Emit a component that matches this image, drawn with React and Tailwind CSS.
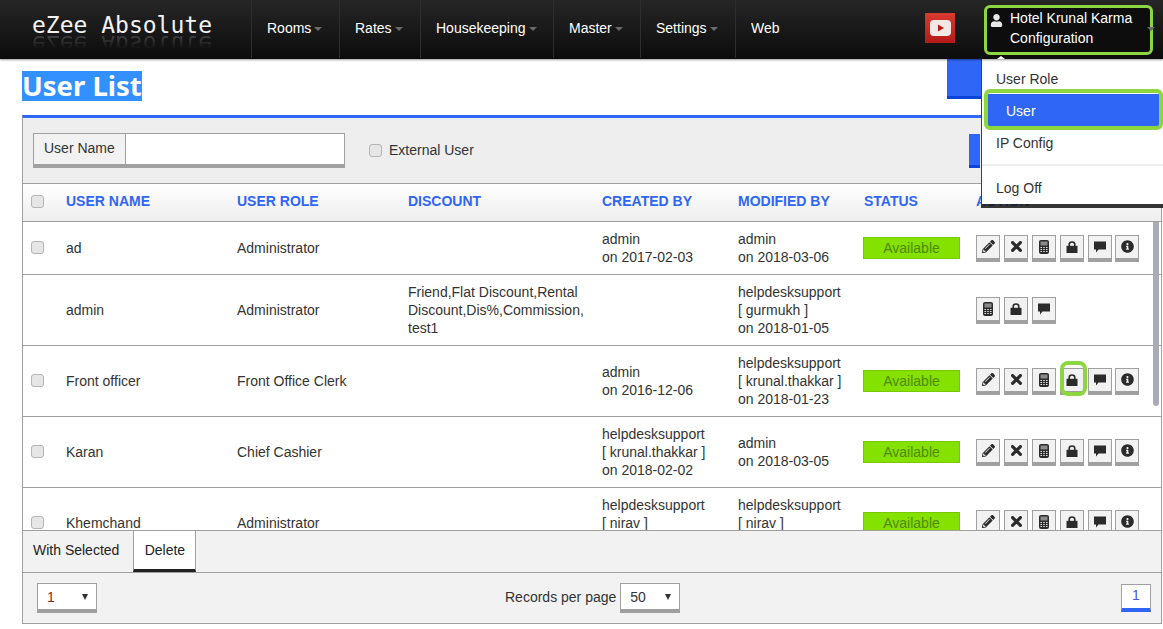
import React from "react";
import { FaPencilAlt, FaInfoCircle, FaUser } from "react-icons/fa";

const font = { fontFamily: '"Liberation Sans", Arial, sans-serif' };

const Calc = () => (
  <svg width="10" height="14" viewBox="0 0 10 14">
    <rect x="0" y="0" width="10" height="14" rx="2" fill="#2b2b2b" />
    <rect x="1.5" y="1.5" width="7" height="4" fill="#8a8a8a" />
    <g fill="#e8e8e8">
      <rect x="1.5" y="7" width="1.5" height="1" /><rect x="4.25" y="7" width="1.5" height="1" /><rect x="7" y="7" width="1.5" height="1" />
      <rect x="1.5" y="9" width="1.5" height="1" /><rect x="4.25" y="9" width="1.5" height="1" /><rect x="7" y="9" width="1.5" height="1" />
      <rect x="1.5" y="11" width="1.5" height="1" /><rect x="4.25" y="11" width="1.5" height="1" /><rect x="7" y="11" width="1.5" height="1" />
    </g>
  </svg>
);

const Cross = () => (
  <svg width="11" height="11" viewBox="0 0 11 11">
    <path d="M1.6 1.6 L9.4 9.4 M9.4 1.6 L1.6 9.4" stroke="#2b2b2b" strokeWidth="3.2" strokeLinecap="round" />
  </svg>
);

const Lock = () => (
  <svg width="12" height="12" viewBox="0 0 12 12">
    <path d="M3.2 5 V3.4 C3.2 1.8 4.4 1 6 1 C7.6 1 8.8 1.8 8.8 3.4 V5" fill="none" stroke="#2b2b2b" strokeWidth="1.6" />
    <rect x="0.5" y="4.8" width="11" height="7.2" fill="#2b2b2b" />
  </svg>
);

const Comment = () => (
  <svg width="12" height="12" viewBox="0 0 12 12">
    <path d="M0 0.5 H12 V8.5 H4.5 L2 11.5 V8.5 H0 Z" fill="#2b2b2b" />
  </svg>
);

const ActionBtn = ({ children, highlight, className = "" }) => (
  <div className={`relative w-6 h-[27px] bg-[#f2f2f2] border border-[#a0a0a0] border-b-[4px] flex items-center justify-center text-[#2b2b2b] ${highlight ? "z-10" : ""} ${className}`}>
    {children}
    {highlight && <div className="absolute -left-[1px] -right-[4px] -top-[8px] -bottom-[5px] border-[4px] border-[#8ed63f] rounded-lg"></div>}
  </div>
);

const Checkbox = ({ className = "" }) => <div className={`w-[13px] h-[13px] rounded-[3px] border border-[#b5b5b5] bg-[#e6e6e6] ${className}`}></div>;

const NavItem = ({ label, w, caret = true }) => (
  <div className={`${w} h-[58px] flex items-center pl-[15px] pb-[3px] border-l border-[#2e2e2e] text-white text-sm`}>
    {label}
    {caret && <span className="ml-[3px] mt-[3px] w-0 h-0 border-x-[4px] border-x-transparent border-t-[4px] border-t-[#6a6a6a]"></span>}
  </div>
);

const Actions = ({ full = true, highlight = false }) => (
  <div className="flex gap-1">
    {full && <ActionBtn><FaPencilAlt size={13} /></ActionBtn>}
    {full && <ActionBtn><Cross /></ActionBtn>}
    <ActionBtn><Calc /></ActionBtn>
    <ActionBtn highlight={highlight}><Lock /></ActionBtn>
    <ActionBtn><Comment /></ActionBtn>
    {full && <ActionBtn className="-ml-[1px]"><FaInfoCircle size={13} /></ActionBtn>}
  </div>
);

const rows = [
  { h: "h-[53px]", check: true, name: "ad", role: "Administrator", created: ["admin", "on 2017-02-03"], modified: ["admin", "on 2018-03-06"], status: true, full: true },
  { h: "h-[71px]", check: false, name: "admin", role: "Administrator", discount: ["Friend,Flat Discount,Rental", "Discount,Dis%,Commission,", "test1"], created: [], modified: ["helpdesksupport", "[ gurmukh ]", "on 2018-01-05"], status: false, full: false },
  { h: "h-[71px]", check: true, name: "Front officer", role: "Front Office Clerk", created: ["admin", "on 2016-12-06"], modified: ["helpdesksupport", "[ krunal.thakkar ]", "on 2018-01-23"], status: true, full: true, highlight: true },
  { h: "h-[71px]", check: true, name: "Karan", role: "Chief Cashier", created: ["helpdesksupport", "[ krunal.thakkar ]", "on 2018-02-02"], modified: ["admin", "on 2018-03-05"], status: true, full: true },
  { h: "h-[71px]", check: true, name: "Khemchand", role: "Administrator", created: ["helpdesksupport", "[ nirav ]", "on 2018-02-02"], modified: ["helpdesksupport", "[ nirav ]", "on 2018-02-02"], status: true, full: true },
];

const cols = "grid grid-cols-[14px_171px_171px_194px_136px_126px_133px_1fr]";

const Lines = ({ items }) => (
  <div className="leading-[18px] whitespace-nowrap">
    {(items || []).map((t) => <div key={t}>{t}</div>)}
  </div>
);

const SelectBox = ({ value, color }) => (
  <div className={`w-[60px] h-[30px] bg-white border border-[#a0a0a0] border-b-[4px] flex items-center justify-between pl-[9px] pr-[8px] text-sm ${color}`}>
    <span>{value}</span>
    <span className="w-0 h-0 border-x-[3.5px] border-x-transparent border-t-[6px] border-t-[#333]"></span>
  </div>
);

export default function App() {
  return (
    <div className="relative w-[1163px] h-[629px] overflow-hidden bg-white text-sm text-[#333]" style={font}>
      <header className="h-[59px] bg-gradient-to-b from-[#262626] to-[#0c0c0c] flex items-start shadow-[0_1px_2px_rgba(0,0,0,0.4)] relative z-20">
        <div className="w-[251px] pl-[32px] pt-[8px] relative text-[23px] leading-[34px] text-[#f2f2f2]" style={{ fontFamily: '"DejaVu Sans Mono", monospace' }}>
          eZee Absolute
          <span aria-hidden="true" className="absolute left-[32px] top-[27px] -scale-y-100 opacity-20 [mask-image:linear-gradient(to_bottom,transparent_35%,black_75%)]">eZee Absolute</span>
        </div>
        <NavItem label="Rooms" w="w-[88px]" />
        <NavItem label="Rates" w="w-[81px]" />
        <NavItem label="Housekeeping" w="w-[133px]" />
        <NavItem label="Master" w="w-[87px]" />
        <NavItem label="Settings" w="w-[95px]" />
        <NavItem label="Web" w="w-[60px]" caret={false} />
        <div className="ml-auto h-full flex items-center">
          <div className="w-[30px] h-[30px] mb-[3px] bg-gradient-to-b from-[#d93a30] to-[#b31a18] flex items-center justify-center mr-[29px]">
            <svg width="21" height="16" viewBox="0 0 21 16">
              <rect width="21" height="16" rx="4" fill="#f3e9e4" />
              <path d="M8 4.5 L14 8 L8 11.5 Z" fill="#b81c1a" />
            </svg>
          </div>
          <div className="relative w-[169px] h-[50px] mr-[10px] border-[3px] border-[#8ed63f] rounded-md bg-[#0d0d0d] text-white text-sm leading-5 flex">
            <FaUser size={13} className="ml-[3px] mt-[6px] text-[#e8e8e8]" />
            <div className="ml-[7px]">
              <div>Hotel Krunal Karma</div>
              <div>Configuration</div>
            </div>
          </div>
          <span className="absolute right-[8px] top-[27px] w-0 h-0 border-x-[4px] border-x-transparent border-t-[4px] border-t-[#6a6a6a]"></span>
        </div>
      </header>

      <div className="flex justify-between pl-[22px]">
        <h1 className="mt-[12px] h-[30px] bg-[#3390ff] text-white text-[27.5px] leading-[30px] font-bold" style={{ fontFamily: '"Noto Sans", sans-serif' }}>User List</h1>
        <div className="w-[34px] h-[40px] mr-[182px] bg-[#2f66f6] border-b-[3px] border-[#0a44d8]"></div>
      </div>

      <main className="ml-[22px] mt-[14px] mr-[1px] h-[509px] border-x border-b border-[#a0a0a0] border-t-[3px] border-t-[#2f66f6] flex flex-col">
        <div className="h-[66px] shrink-0 bg-[#eeeeee] flex items-center pl-[10px] pr-[181px] border-b border-[#a0a0a0]">
          <div className="w-[312px] h-[35px] flex border border-[#a0a0a0] border-b-[4px] bg-white">
            <div className="w-[92px] bg-[#f2f2f2] border-r border-[#a0a0a0] pl-[10px] pt-[4px]">User Name</div>
          </div>
          <div className="ml-[24px] flex items-center gap-[7px]">
            <Checkbox />
            <span className="-mt-[2px]">External User</span>
          </div>
          <div className="ml-auto w-[11px] h-[34px] bg-[#2f66f6] border-b-[3px] border-[#0a44d8]"></div>
        </div>

        <div className={`${cols} h-[38px] shrink-0 items-center pl-[8px] pb-[3px] border-b border-[#a0a0a0] bg-gradient-to-b from-white to-[#eeeeee] font-bold text-[#2f66f6]`}>
          <Checkbox />
          <div className="pl-[21px]">USER NAME</div>
          <div className="pl-[21px]">USER ROLE</div>
          <div className="pl-[21px]">DISCOUNT</div>
          <div className="pl-[21px]">CREATED BY</div>
          <div className="pl-[21px]">MODIFIED BY</div>
          <div className="pl-[21px]">STATUS</div>
          <div>ACTION</div>
        </div>

        <div className="h-[308px] shrink-0 relative overflow-hidden">
          {rows.map((r) => (
            <div key={r.name} className={`${cols} ${r.h} items-center pl-[8px] border-b border-[#a0a0a0]`}>
              <div>{r.check && <Checkbox className="-mt-[2px]" />}</div>
              <div className="pl-[21px]">{r.name}</div>
              <div className="pl-[21px]">{r.role}</div>
              <div className="pl-[21px]"><Lines items={r.discount} /></div>
              <div className="pl-[21px]"><Lines items={r.created} /></div>
              <div className="pl-[21px]"><Lines items={r.modified} /></div>
              <div className="pl-[20px]">
                {r.status && <div className="w-[97px] h-[22px] bg-[#85e100] border border-[#78c800] text-[#4f8a00] flex items-center justify-center">Available</div>}
              </div>
              <div><Actions full={r.full} highlight={r.highlight} /></div>
            </div>
          ))}
          <div className="absolute right-[2px] top-0 w-[6px] h-[184px] rounded-b-sm bg-[#a8adb5]"></div>
        </div>

        <div className="h-[43px] shrink-0 bg-[#f2f2f2] border-y border-[#a0a0a0] flex">
          <div className="pl-[10px] pr-[14px] pb-[3px] flex items-center text-[#222]">With Selected</div>
          <div className="w-[63px] h-full bg-white border-x border-[#a0a0a0] border-b-[3px] border-b-[#222] flex items-center justify-center text-[#222]">Delete</div>
        </div>

        <div className="flex-1 bg-[#f2f2f2] flex items-center pl-[14px] pr-[10px]">
          <SelectBox value="1" color="text-[#8a2a1a]" />
          <div className="ml-[408px] mr-[4px] -mt-[2px]">Records per page</div>
          <SelectBox value="50" color="text-[#333]" />
          <div className="ml-auto w-[30px] h-[28px] bg-white border border-[#a0a0a0] border-b-[4px] border-b-[#2f66f6] text-[#4a55e0] flex justify-center">1</div>
        </div>
      </main>

      <div className="absolute left-[981px] top-[59px] right-0 h-[145px] bg-white border-l border-[#1f3fa0] shadow-[0_4px_0_rgba(20,20,20,0.85)] z-10">
        <div className="h-[35px] pl-[14px] pt-[10px]">User Role</div>
        <div className="h-[32px] ml-[6px] mr-[3px] pt-[1px] bg-[#2f66f6] text-white pl-[18px] flex items-center">User</div>
        <div className="h-[38px] pl-[14px] pt-[7px]">IP Config</div>
        <div className="border-t-2 border-[#eeeeee] pl-[14px] pt-[12px]">Log Off</div>
      </div>
      <div className="absolute left-[997px] top-[56px] w-0 h-0 border-x-[4px] border-x-transparent border-b-[3px] border-b-white z-30"></div>
      <div className="absolute left-[984px] top-[89px] right-0 h-[41px] border-[4px] border-[#8ed63f] rounded-md z-10"></div>
    </div>
  );
}
